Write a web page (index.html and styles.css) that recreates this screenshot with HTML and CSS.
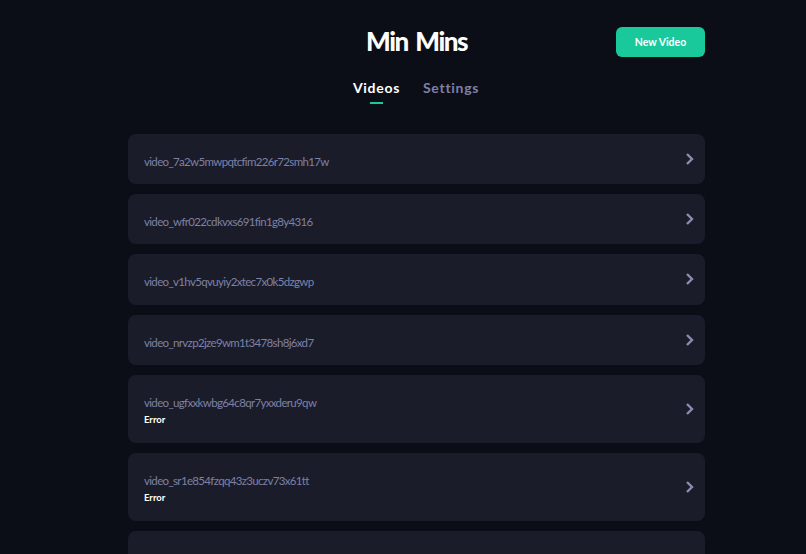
FILE: index.html
```html
<!DOCTYPE html>
<html lang="en">

<head>
    <meta charset="UTF-8">
    <meta name="viewport" content="width=device-width, initial-scale=1.0">
    <title>Min Mins</title>
    <link rel="stylesheet" href="styles.css">
</head>

<body>
    <div class="app">
        <!-- Header -->
        <div class="header">
            <h1 class="title">Min Mins</h1>
            <button class="new-btn">New Video</button>
        </div>

        <!-- Tabs -->
        <div class="tabs">
            <div class="tab active">Videos</div>
            <div class="tab">Settings</div>
        </div>

        <!-- Video list -->
        <div class="video-list">
            <div class="video-item">
                <div class="video-info">
                    <div class="video-name">video_7a2w5mwpqtcfim226r72smh17w</div>
                </div>
                <svg class="chevron" viewBox="0 0 10 14"><path d="M2 2l5 5-5 5"/></svg>
            </div>
            <div class="video-item">
                <div class="video-info">
                    <div class="video-name">video_wfr022cdkvxs691fin1g8y4316</div>
                </div>
                <svg class="chevron" viewBox="0 0 10 14"><path d="M2 2l5 5-5 5"/></svg>
            </div>
            <div class="video-item">
                <div class="video-info">
                    <div class="video-name">video_v1hv5qvuyiy2xtec7x0k5dzgwp</div>
                </div>
                <svg class="chevron" viewBox="0 0 10 14"><path d="M2 2l5 5-5 5"/></svg>
            </div>
            <div class="video-item">
                <div class="video-info">
                    <div class="video-name">video_nrvzp2jze9wm1t3478sh8j6xd7</div>
                </div>
                <svg class="chevron" viewBox="0 0 10 14"><path d="M2 2l5 5-5 5"/></svg>
            </div>
            <div class="video-item has-error">
                <div class="video-info">
                    <div class="video-name">video_ugfxxkwbg64c8qr7yxxderu9qw</div>
                    <div class="video-error">Error</div>
                </div>
                <svg class="chevron" viewBox="0 0 10 14"><path d="M2 2l5 5-5 5"/></svg>
            </div>
            <div class="video-item has-error">
                <div class="video-info">
                    <div class="video-name">video_sr1e854fzqq43z3uczv73x61tt</div>
                    <div class="video-error">Error</div>
                </div>
                <svg class="chevron" viewBox="0 0 10 14"><path d="M2 2l5 5-5 5"/></svg>
            </div>
            <!-- runs off the bottom of the window -->
            <div class="video-item has-error">
                <div class="video-info"></div>
                <svg class="chevron" viewBox="0 0 10 14"><path d="M2 2l5 5-5 5"/></svg>
            </div>
        </div>
    </div>
</body>

</html>
```

FILE: styles.css
```css
:root {
    --bg: #0c0e17;
    --card: #1a1d29;
    --green: #19c99b;
    --muted: #7e80a6;
    --white: #FFFFFF;
}

* {
    margin: 0;
    padding: 0;
    box-sizing: border-box;
    font-family: 'Lato', 'Inter', sans-serif;
}

html,
body {
    height: 100%;
    overflow: hidden;
}

body {
    background-color: var(--bg);
}

.app {
    width: 577px;
    margin-left: 128px;
    padding-top: 27px;
}

/* Header */
.header {
    display: flex;
    justify-content: flex-end;
    align-items: center;
    position: relative;
    height: 30px;
}

.title {
    position: absolute;
    left: 0;
    right: 0;
    top: -2px;
    text-align: center;
    color: var(--white);
    font-size: 26px;
    font-weight: 900;
    letter-spacing: -1.5px;
    word-spacing: 3px;
}

.new-btn {
    width: 89px;
    height: 30px;
    border: none;
    border-radius: 6px;
    background: var(--green);
    color: var(--white);
    font-size: 10.5px;
    font-weight: 700;
}

/* Tabs */
.tabs {
    display: flex;
    justify-content: center;
    gap: 23px;
    margin-top: 22px;
    margin-left: -1px;
}

.tab {
    font-size: 14px;
    font-weight: 700;
    letter-spacing: 0.7px;
    color: var(--muted);
    padding-bottom: 8px;
    position: relative;
}

.tab.active {
    color: var(--white);
}

.tab.active::after {
    content: '';
    position: absolute;
    left: 50%;
    bottom: 0;
    width: 13px;
    height: 2px;
    margin-left: -6px;
    background: var(--green);
}

/* Video list */
.video-list {
    margin-top: 30px;
    display: flex;
    flex-direction: column;
    gap: 10px;
}

.video-item {
    display: flex;
    align-items: center;
    justify-content: space-between;
    min-height: 50.2px;
    padding: 0 10px 0 16px;
    background: var(--card);
    border-radius: 8px;
}

.video-item.has-error {
    min-height: 68px;
}

.video-info {
    padding-top: 5px;
}

.has-error .video-info {
    padding-top: 3px;
}

.video-name {
    font-size: 11.5px;
    letter-spacing: -0.66px;
    color: var(--muted);
}

.video-error {
    margin-top: 5px;
    font-size: 9.5px;
    font-weight: 700;
    color: var(--white);
}

.chevron {
    width: 10px;
    height: 14px;
    fill: none;
    stroke: #8b8db0;
    stroke-width: 2.4;
}
```
